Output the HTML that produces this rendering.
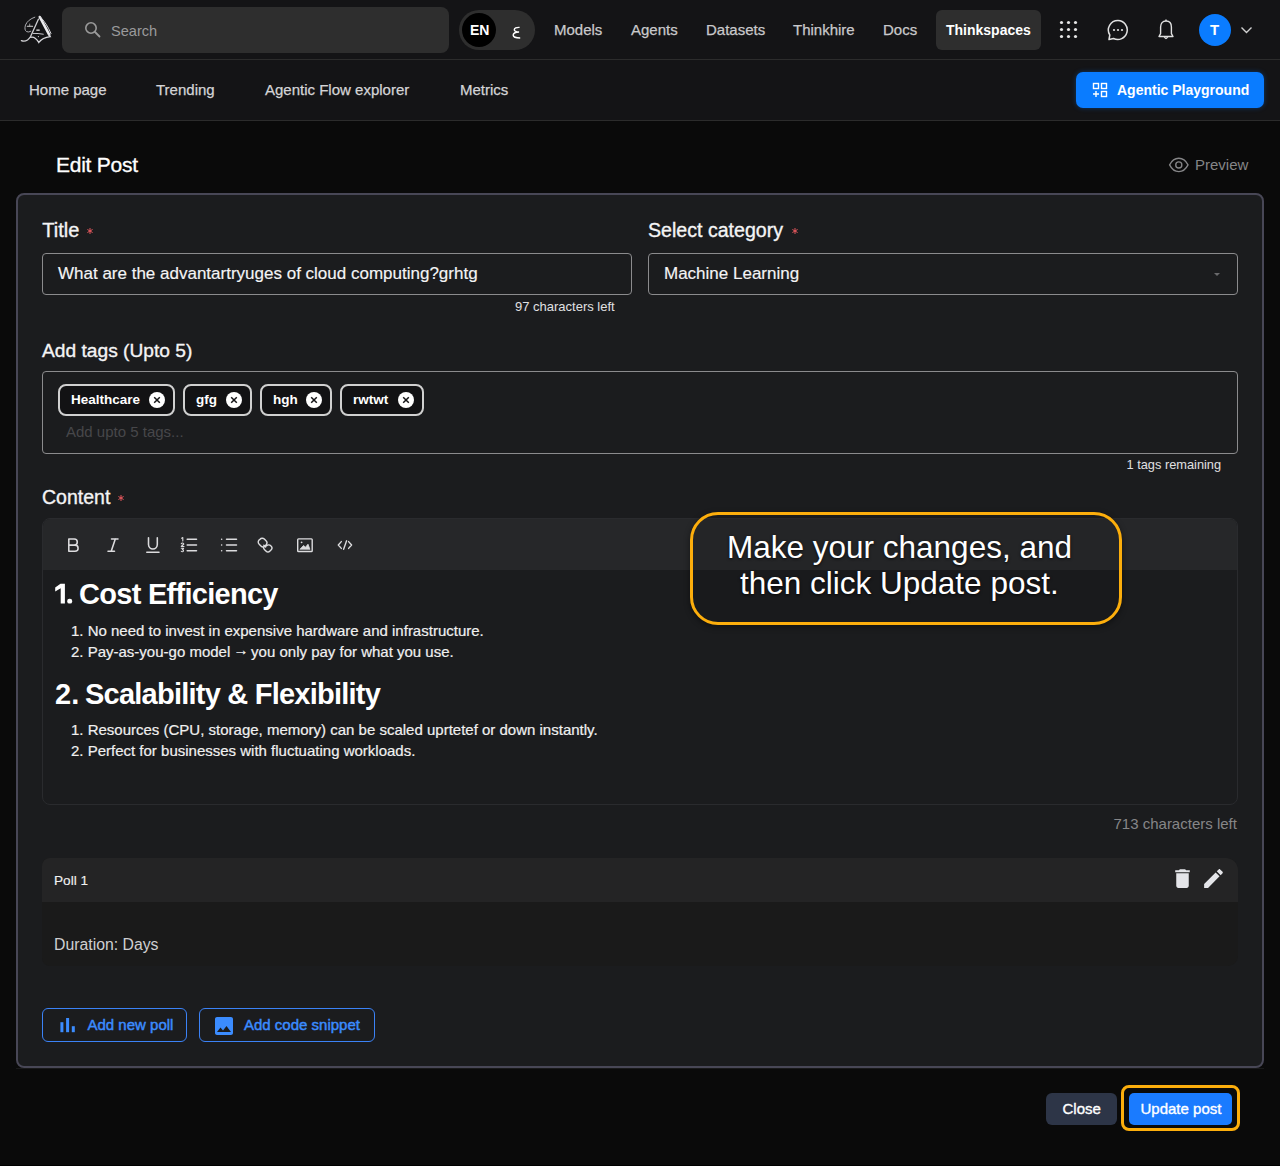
<!DOCTYPE html>
<html><head><meta charset="utf-8">
<style>
*{box-sizing:border-box;margin:0;padding:0}
html,body{width:1280px;height:1168px;overflow:hidden;background:#0a0a0a;font-family:"Liberation Sans",sans-serif;color:#fff}
.a{position:absolute}
.t{position:absolute;white-space:nowrap;line-height:1}
#hdr{position:absolute;left:0;top:0;width:1280px;height:121px;background:#141416}
.hl{position:absolute;left:0;width:1280px;height:1px;background:#2c2c2c}
.nav{color:#c9c9cb;font-size:15px;-webkit-text-stroke:0.25px #c9c9cb}
.sub{color:#d4d4d6;font-size:15px;-webkit-text-stroke:0.25px #d4d4d6}
.lbl{font-size:19px;color:#f4f4f5;-webkit-text-stroke:0.35px #f4f4f5}
.req{color:#e5484d;font-size:12px}
.inp{position:absolute;border:1px solid #8b8b8d;border-radius:4px}
.chip{position:absolute;top:384px;height:32px;border:2px solid #d0d0d0;border-radius:8px;background:#121214}
.chip .t{font-size:13.5px;font-weight:700;top:6.5px}
.x{position:absolute;top:6px;width:16px;height:16px;border-radius:50%;background:#fff}
.h{font-size:29px;font-weight:700;letter-spacing:-0.72px}
.li{font-size:15px;color:#f0f0f0;-webkit-text-stroke:0.2px #f0f0f0}
.bl{position:absolute;top:1008px;height:34px;border:1px solid #3b82f6;border-radius:6px}
.bl .t{color:#3b8cff;font-size:15px;top:8.2px;-webkit-text-stroke:0.45px #3b8cff}
</style></head><body>
<div id="hdr"></div>
<div class="hl" style="top:59px"></div>
<div class="hl" style="top:120px"></div>

<!-- logo -->
<svg class="a" style="left:18px;top:12px" width="40" height="36" viewBox="0 0 40 36" fill="none" stroke-linecap="round">
  <path d="M3.4 28.6 Q6.5 29.8 9.5 28 Q11 27 12.6 24.5 L20.4 7.2" stroke="#cfcfd2" stroke-width="1.3"/>
  <path d="M21.8 5 L31.2 22.6" stroke="#ececee" stroke-width="2.6"/>
  <path d="M22 4.6 Q28.5 11 33 21.5" stroke="#d6d6da" stroke-width="1"/>
  <path d="M12.8 25.3 Q17 24.3 20.8 30.4 Q24.5 25.4 32.2 24.6 L31 22.4" stroke="#d8d8dc" stroke-width="1.4"/>
  <path d="M15 21.4 Q20 21.2 25.3 22.2" stroke="#c8c8cc" stroke-width="1"/>
  <path d="M18.8 18.1 H21.2" stroke="#f0f0f0" stroke-width="1.3"/>
  <circle cx="20.4" cy="24.6" r="0.6" fill="#d0d0d0" stroke="none"/>
  <path d="M16.8 5.2 Q10 7.5 7.5 13 Q6 18 8.6 19.6 Q10.5 20.6 12.8 19.3" stroke="#bdbdc2" stroke-width="0.9"/>
  <path d="M9.3 14.3 H14.6" stroke="#d8d8d8" stroke-width="1.1"/>
  <path d="M11.7 12 V14" stroke="#d0d0d0" stroke-width="0.7"/>
</svg>
<!-- search -->
<div class="a" style="left:62px;top:7px;width:387px;height:46px;background:#2e2e2e;border-radius:8px"></div>
<svg class="a" style="left:84px;top:21px" width="18" height="18" viewBox="0 0 18 18"><circle cx="7" cy="7" r="5.2" fill="none" stroke="#9a9a9a" stroke-width="1.6"/><path d="M11 11 L15.5 15.5" stroke="#9a9a9a" stroke-width="1.8" stroke-linecap="round"/></svg>
<div class="t" style="left:111px;top:23.6px;font-size:14.6px;color:#9a9a9c">Search</div>

<!-- lang toggle -->
<div class="a" style="left:459px;top:10px;width:76px;height:40px;background:#2e2e2e;border-radius:20px"></div>
<div class="a" style="left:462px;top:13px;width:34px;height:34px;background:#000;border-radius:50%"></div>
<div class="t" style="left:470px;top:23px;font-size:14px;font-weight:700">EN</div>
<svg class="a" style="left:510px;top:25px" width="12" height="16" viewBox="0 0 12 16"><path d="M9.6 2.4 Q4.4 2.2 4.3 4.8 Q4.4 6.9 9.1 7 M9.1 7 Q3.3 7.2 3.2 10.1 Q3.3 12.9 10.2 12.9" fill="none" stroke="#fff" stroke-width="1.45"/></svg>

<!-- nav -->
<div class="t nav" style="left:554px;top:22px">Models</div>
<div class="t nav" style="left:631px;top:22px">Agents</div>
<div class="t nav" style="left:706px;top:22px">Datasets</div>
<div class="t nav" style="left:793px;top:22px">Thinkhire</div>
<div class="t nav" style="left:883px;top:22px">Docs</div>
<div class="a" style="left:936px;top:10px;width:105px;height:40px;background:#2e2e2e;border-radius:6px"></div>
<div class="t" style="left:946px;top:23px;font-size:14px;font-weight:700">Thinkspaces</div>

<!-- grid icon -->
<svg class="a" style="left:1058px;top:19px" width="22" height="22" viewBox="0 0 22 22" fill="#e6e6e6">
<circle cx="3.5" cy="3.5" r="1.6"/><circle cx="10.5" cy="3.5" r="1.6"/><circle cx="17.5" cy="3.5" r="1.6"/>
<circle cx="3.5" cy="10.5" r="1.6"/><circle cx="10.5" cy="10.5" r="1.6"/><circle cx="17.5" cy="10.5" r="1.6"/>
<circle cx="3.5" cy="17.5" r="1.6"/><circle cx="10.5" cy="17.5" r="1.6"/><circle cx="17.5" cy="17.5" r="1.6"/>
</svg>
<!-- chat -->
<svg class="a" style="left:1106px;top:18px" width="24" height="24" viewBox="0 0 24 24">
<path d="M12 2.5 A9.5 9.5 0 1 1 7.5 20.5 L3 21.5 L3.8 17 A9.5 9.5 0 0 1 12 2.5 Z" fill="none" stroke="#e0e0e0" stroke-width="1.5" stroke-linejoin="round"/>
<circle cx="8" cy="12" r="1.1" fill="#e0e0e0"/><circle cx="12" cy="12" r="1.1" fill="#e0e0e0"/><circle cx="16" cy="12" r="1.1" fill="#e0e0e0"/>
</svg>
<!-- bell -->
<svg class="a" style="left:1153.5px;top:17.3px" width="24" height="24" viewBox="0 0 24 24">
<path d="M12 4 C8.6 4 6.6 6.3 6.6 10 L6.6 16.6 L5 19.5 L19 19.5 L17.4 16.6 L17.4 10 C17.4 6.3 15.4 4 12 4 Z" fill="none" stroke="#e0e0e0" stroke-width="1.4" stroke-linejoin="round"/>
<path d="M10.3 19.8 Q12 23.2 13.7 19.8" fill="none" stroke="#e0e0e0" stroke-width="1.3"/>
<path d="M12 2.6 L12 4" stroke="#e0e0e0" stroke-width="1.4"/>
</svg>
<!-- avatar -->
<div class="a" style="left:1199px;top:14px;width:32px;height:32px;border-radius:50%;background:#0a7cff"></div>
<div class="t" style="left:1210px;top:21.6px;font-size:15px;font-weight:700">T</div>
<svg class="a" style="left:1240px;top:25px" width="13" height="10" viewBox="0 0 13 10"><path d="M1.5 2.5 L6.5 7.5 L11.5 2.5" fill="none" stroke="#d0d0d0" stroke-width="1.4"/></svg>

<!-- subnav -->
<div class="t sub" style="left:29px;top:82px">Home page</div>
<div class="t sub" style="left:156px;top:82px">Trending</div>
<div class="t sub" style="left:265px;top:82px">Agentic Flow explorer</div>
<div class="t sub" style="left:460px;top:82px">Metrics</div>

<div class="a" style="left:1076px;top:72px;width:188px;height:36px;background:#0a7cff;border-radius:7px;box-shadow:0 0 5px rgba(10,124,255,0.35)"></div>
<svg class="a" style="left:1092px;top:82px" width="16" height="16" viewBox="0 0 16 16" fill="none" stroke="#fff" stroke-width="1.4">
<rect x="1.5" y="1.5" width="5" height="5"/><rect x="9.5" y="1.5" width="5" height="5"/><rect x="9.5" y="9.5" width="5" height="5"/><path d="M4 9 L4 15 M1 12 L7 12"/>
</svg>
<div class="t" style="left:1117px;top:83px;font-size:14px;font-weight:700">Agentic Playground</div>

<!-- edit post -->
<div class="t" style="left:56px;top:154px;font-size:21px;letter-spacing:-0.25px;-webkit-text-stroke:0.3px #fff">Edit Post</div>
<svg class="a" style="left:1168px;top:157px" width="22" height="16" viewBox="0 0 22 16"><path d="M1.6 7.9 C4 3.1 7.4 1.25 10.8 1.25 C14.2 1.25 17.6 3.1 20 7.9 C17.6 12.7 14.2 14.55 10.8 14.55 C7.4 14.55 4 12.7 1.6 7.9 Z" fill="none" stroke="#858587" stroke-width="1.35"/><circle cx="10.8" cy="7.9" r="3.05" fill="none" stroke="#858587" stroke-width="1.35"/></svg>
<div class="t" style="left:1195px;top:156.5px;font-size:15px;color:#858587">Preview</div>

<!-- card -->
<div class="a" style="left:16px;top:193px;width:1248px;height:875px;background:#1b1c1e;border:2px solid #484756;border-radius:8px"></div>

<div class="a" style="left:16px;top:1068px;width:1248px;height:1px;background:#19191a"></div>
<div class="t lbl" style="left:42.3px;top:220px;font-size:20px">Title</div>
<svg class="a req" style="left:87px;top:227.5px" width="6" height="6" viewBox="0 0 6 6"><path d="M3 0 V6 M0.4 1.5 L5.6 4.5 M0.4 4.5 L5.6 1.5" stroke="#ec5a5f" stroke-width="0.95"/></svg>
<div class="inp" style="left:42px;top:253px;width:590px;height:42px"></div>
<div class="t" style="left:58px;top:265px;font-size:17px;color:#f4f4f5;-webkit-text-stroke:0.15px #f4f4f5">What are the advantartryuges of cloud computing?grhtg</div>
<div class="t" style="left:515px;top:300px;font-size:13px;color:#e0e0e2">97 characters left</div>

<div class="t lbl" style="left:648px;top:221px;font-size:19.6px">Select category</div>
<svg class="a req" style="left:791.5px;top:227.5px" width="6" height="6" viewBox="0 0 6 6"><path d="M3 0 V6 M0.4 1.5 L5.6 4.5 M0.4 4.5 L5.6 1.5" stroke="#ec5a5f" stroke-width="0.95"/></svg>
<div class="inp" style="left:648px;top:253px;width:590px;height:42px"></div>
<div class="t" style="left:664px;top:265px;font-size:17px;color:#f4f4f5;-webkit-text-stroke:0.15px #f4f4f5">Machine Learning</div>
<svg class="a" style="left:1214px;top:272.5px" width="6" height="3" viewBox="0 0 6 3"><path d="M0 0 H6 L3 3 Z" fill="#6a6a6c"/></svg>

<div class="t lbl" style="left:42px;top:341px;font-size:19.2px">Add tags (Upto 5)</div>
<div class="inp" style="left:42px;top:371px;width:1196px;height:83px"></div>
<div class="chip" style="left:58px;width:117px"><div class="t" style="left:11px">Healthcare</div><svg class="x" style="left:88.7px" viewBox="0 0 16 16"><path d="M5.2 5.2 L10.8 10.8 M10.8 5.2 L5.2 10.8" stroke="#141416" stroke-width="1.5"/></svg></div>
<div class="chip" style="left:183px;width:69px"><div class="t" style="left:11px">gfg</div><svg class="x" style="left:40.7px" viewBox="0 0 16 16"><path d="M5.2 5.2 L10.8 10.8 M10.8 5.2 L5.2 10.8" stroke="#141416" stroke-width="1.5"/></svg></div>
<div class="chip" style="left:260px;width:72px"><div class="t" style="left:11px">hgh</div><svg class="x" style="left:43.7px" viewBox="0 0 16 16"><path d="M5.2 5.2 L10.8 10.8 M10.8 5.2 L5.2 10.8" stroke="#141416" stroke-width="1.5"/></svg></div>
<div class="chip" style="left:340px;width:84px"><div class="t" style="left:11px">rwtwt</div><svg class="x" style="left:55.7px" viewBox="0 0 16 16"><path d="M5.2 5.2 L10.8 10.8 M10.8 5.2 L5.2 10.8" stroke="#141416" stroke-width="1.5"/></svg></div>
<div class="t" style="left:66px;top:424px;font-size:15px;color:#47474a">Add upto 5 tags...</div>
<div class="t" style="left:1126.5px;top:459px;font-size:12.8px;color:#e0e0e2">1 tags remaining</div>

<div class="t lbl" style="left:42px;top:488px;font-size:19.5px">Content</div>
<svg class="a req" style="left:118px;top:494.5px" width="6" height="6" viewBox="0 0 6 6"><path d="M3 0 V6 M0.4 1.5 L5.6 4.5 M0.4 4.5 L5.6 1.5" stroke="#ec5a5f" stroke-width="0.95"/></svg>

<!-- editor -->
<div class="a" style="left:42px;top:518px;width:1196px;height:287px;border:1px solid #2a2b2e;border-radius:8px;background:#1b1c1e;overflow:hidden">
  <div class="a" style="left:0;top:0;width:1196px;height:51px;background:#262729"></div>
</div>
<!-- toolbar icons -->
<svg class="a" style="left:64px;top:536px" width="300" height="18" viewBox="0 0 300 18" fill="none" stroke="#dcdcde" stroke-width="1.55" stroke-linecap="round" stroke-linejoin="round">
  <!-- B: x 3.6-14.2, y 2.4-15.7 -->
  <path d="M4.8 2.9 H10.2 A3.1 3.1 0 0 1 10.2 9.1 H4.8 Z M4.8 9.1 H11 A3.1 3.05 0 0 1 11 15.2 H4.8 Z"/>
  <!-- I: 43.8-54 -->
  <path d="M47.5 2.9 H54 M44 15.2 H50.5 M51.3 2.9 L47.2 15.2"/>
  <!-- U: 82.1-95.8 -->
  <path d="M84.5 1.8 V8.5 A4.4 4.4 0 0 0 93.3 8.5 V1.8 M82.8 16.3 H95"/>
  <!-- OL: 116.7-132.9 -->
  <path d="M123.2 3.3 H132.5 M123.2 9 H132.5 M123.2 14.7 H132.5"/>
  <path d="M117.6 2.2 L118.8 1.6 V5 M117.3 7.7 A1.3 1.2 0 0 1 119.8 8 L117.3 10.5 H120 M117.3 12.3 H119.6 L118.4 13.6 A1.2 1.1 0 1 1 117.3 15.3" stroke-width="1.1"/>
  <!-- UL: 156.8-173 -->
  <path d="M162.5 3.3 H172.5 M162.5 9 H172.5 M162.5 14.7 H172.5 M157.6 3.3 H157.7 M157.6 9 H157.7 M157.6 14.7 H157.7" stroke-width="1.5"/>
  <!-- link: 193.5-208.1 -->
  <path d="M199.8 9.3 L201.6 11.1 M196 3.3 A2.9 2.9 0 0 1 200.3 3.1 L202 4.8 A2.9 2.9 0 0 1 202 8.9 L201 9.9 A2.9 2.9 0 0 1 196.9 9.9 L195.2 8.2 A2.9 2.9 0 0 1 195.1 3.9 Z M202.6 9.7 A2.9 2.9 0 0 1 206.8 9.8 L207 10 A2.9 2.9 0 0 1 207 14.1 L206 15.1 A2.9 2.9 0 0 1 201.9 15.1 L200.6 13.8 A2.9 2.9 0 0 1 200.6 9.7 Z" stroke-width="1.4"/>
  <!-- image: 233-248.9 -->
  <rect x="233.7" y="2.9" width="14.5" height="12.6" rx="0.8" stroke-width="1.4"/>
  <path d="M236.2 13 L239.5 9.5 L241.5 11.2 L244 8.2 L245.8 13 Z" fill="#dcdcde" stroke-width="0.8"/>
  <circle cx="237.6" cy="6.3" r="0.9" fill="#dcdcde" stroke="none"/>
  <!-- code: 273.5-288.4 -->
  <path d="M277.3 5.6 L274.3 9 L277.3 12.4 M284.6 5.6 L287.6 9 L284.6 12.4 M282.6 4.8 L279.6 13.3" stroke-width="1.4"/>
</svg>

<svg class="a" style="left:54px;top:583px" width="20" height="22" viewBox="0 0 20 22"><path d="M6.5 0.7 H10.9 V20.6 H6.7 V5.3 L1.2 8.6 V4.5 Z" fill="#fff"/><rect x="13.2" y="15.7" width="5" height="4.9" rx="2.2" fill="#fff"/></svg><div class="t h" style="left:79px;top:580px">Cost Efficiency</div>
<div class="t li" style="left:71px;top:623px">1. No need to invest in expensive hardware and infrastructure.</div>
<div class="t li" style="left:71px;top:644px">2. Pay-as-you-go model <span style="position:relative;top:-2px;margin-left:-1px;margin-right:-1.5px">→</span> you only pay for what you use.</div>
<div class="t h" style="left:55px;top:680px;letter-spacing:0">2.</div><div class="t h" style="left:85px;top:680px;letter-spacing:-0.77px">Scalability &amp; Flexibility</div>
<div class="t li" style="left:71px;top:722px">1. Resources (CPU, storage, memory) can be scaled uprtetef or down instantly.</div>
<div class="t li" style="left:71px;top:743px">2. Perfect for businesses with fluctuating workloads.</div>

<div class="t" style="left:1113.5px;top:816px;font-size:15px;color:#868688">713 characters left</div>

<!-- poll -->
<div class="a" style="left:42px;top:858px;width:1196px;height:108px;border-radius:8px 12px 10px 8px;background:#1a1a1a;overflow:hidden">
  <div class="a" style="left:0;top:0;width:1196px;height:44px;background:#242425"></div>
</div>
<div class="t" style="left:54px;top:874px;font-size:13.6px;color:#f0f0f0;-webkit-text-stroke:0.15px #f0f0f0">Poll 1</div>
<svg class="a" style="left:1169.5px;top:866px" width="25" height="25" viewBox="0 0 24 24"><path fill="#e4e5e9" d="M6 19c0 1.1.9 2 2 2h8c1.1 0 2-.9 2-2V7H6v12zM19 4h-3.5l-1-1h-5l-1 1H5v2h14V4z"/></svg>
<svg class="a" style="left:1201px;top:865.5px" width="25" height="25" viewBox="0 0 24 24"><path fill="#e4e5e9" d="M3 17.25V21h3.75L17.81 9.94l-3.75-3.75L3 17.25zM20.71 7.04c.39-.39.39-1.02 0-1.41l-2.34-2.34c-.39-.39-1.02-.39-1.41 0l-1.83 1.83 3.75 3.75 1.83-1.83z"/></svg>
<div class="t" style="left:54px;top:937px;font-size:15.8px;color:#cfcfd1">Duration: Days</div>

<div class="bl" style="left:42px;width:145px">
  <svg class="a" style="left:16.5px;top:8.8px" width="16" height="15" viewBox="0 0 16 15" fill="#3b8cff"><rect x="0.4" y="4.2" width="3" height="10"/><rect x="6.1" y="0" width="3" height="14.2"/><rect x="11.8" y="8.2" width="3" height="6"/></svg>
  <div class="t" style="left:44.5px">Add new poll</div></div>
<div class="bl" style="left:199px;width:176px">
  <svg class="a" style="left:12px;top:4.5px" width="24" height="24" viewBox="0 0 24 24"><path fill="#3b8cff" d="M21 19V5c0-1.1-.9-2-2-2H5c-1.1 0-2 .9-2 2v14c0 1.1.9 2 2 2h14c1.1 0 2-.9 2-2zM8.5 13.5l2.5 3.01L14.5 12l4.5 6H5l3.5-4.5z"/></svg>
  <div class="t" style="left:44px">Add code snippet</div></div>

<!-- bottom buttons -->
<div class="a" style="left:1046px;top:1093px;width:71px;height:32px;background:#2d3547;border-radius:6px"></div>
<div class="t" style="left:1062.5px;top:1101px;font-size:15px;-webkit-text-stroke:0.35px #fff">Close</div>
<div class="a" style="left:1121px;top:1085px;width:119px;height:46px;border:3px solid #fcae0c;border-radius:8px"></div>
<div class="a" style="left:1129px;top:1093px;width:103px;height:32px;background:#1a7bff;border-radius:5px"></div>
<div class="t" style="left:1140.5px;top:1101px;font-size:15px;-webkit-text-stroke:0.35px #fff">Update post</div>

<!-- tooltip -->
<div class="a" style="left:690px;top:512px;width:432px;height:113px;border:3px solid #fcae0c;border-radius:28px;background:rgba(0,0,0,0.04);box-shadow:0 2px 6px rgba(0,0,0,0.45)"></div>
<div class="t" style="left:727px;top:532px;font-size:31.5px;text-shadow:0 1px 3px rgba(0,0,0,0.8)">Make your changes, and</div>
<div class="t" style="left:740px;top:567.5px;font-size:31.5px;text-shadow:0 1px 3px rgba(0,0,0,0.8)">then click Update post.</div>

<div class="a" style="left:0;top:1165px;width:1280px;height:1px;background:#000"></div>
<div class="a" style="left:0;top:1166px;width:1280px;height:2px;background:#fff"></div>
</body></html>
